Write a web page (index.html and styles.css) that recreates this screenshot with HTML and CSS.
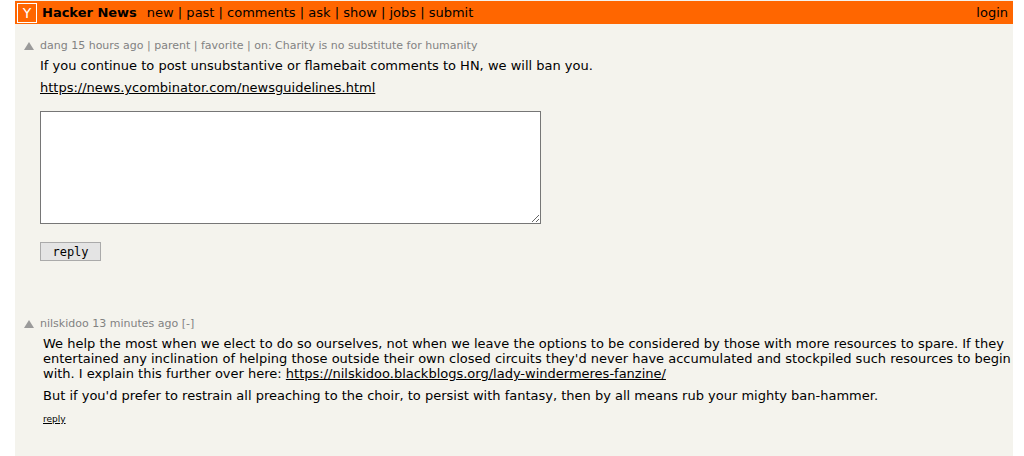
FILE: index.html
```html
<!DOCTYPE html>
<html lang="en">
<head>
  <meta charset="UTF-8">
  <title>Hacker News</title>
  <link rel="stylesheet" href="styles.css">
</head>
<body>
  <div class="page">
    <header class="topbar">
      <span class="logo">Y</span>
      <b class="brand">Hacker News</b>
      <nav class="nav">new | past | comments | ask | show | jobs | submit</nav>
      <a class="login" href="#">login</a>
    </header>
    <section class="item">
      <div class="meta"><span class="vote"></span>dang 15 hours ago | parent | favorite | on: Charity is no substitute for humanity</div>
      <div class="body">
        <p>If you continue to post unsubstantive or flamebait comments to HN, we will ban you.</p>
        <p><a href="#">https://news.ycombinator.com/newsguidelines.html</a></p>
      </div>
      <textarea class="reply-box"></textarea>
      <button class="reply-btn">reply</button>
    </section>
    <section class="item second">
      <div class="meta"><span class="vote"></span>nilskidoo 13 minutes ago [-]</div>
      <div class="body wide">
        <p>We help the most when we elect to do so ourselves, not when we leave the options to be considered by those with more resources to spare. If they entertained any inclination of helping those outside their own closed circuits they'd never have accumulated and stockpiled such resources to begin with. I explain this further over here: <a href="#">https://nilskidoo.blackblogs.org/lady-windermeres-fanzine/</a></p>
        <p>But if you'd prefer to restrain all preaching to the choir, to persist with fantasy, then by all means rub your mighty ban-hammer.</p>
      </div>
      <a class="small-reply" href="#">reply</a>
    </section>
  </div>
</body>
</html>
```
FILE: styles.css
```css
* {
  box-sizing: border-box;
}
html, body {
  margin: 0;
  height: 100%;
  overflow: hidden;
  background: #fff;
}
body {
  font-family: "DejaVu Sans", Verdana, sans-serif;
  font-size: 13px;
  color: #000;
}
a {
  color: inherit;
}
.page {
  width: 998px;
  height: 456px;
  margin-left: 15px;
  padding-top: 1px;
  background: #f4f3ed;
}
.topbar {
  display: flex;
  align-items: center;
  height: 23px;
  padding: 0 5px 0 2px;
  background: #ff6600;
  font-size: 13px;
}
.logo {
  width: 20px;
  height: 20px;
  border: 1px solid #fff;
  color: #fff;
  font-size: 14px;
  line-height: 18px;
  text-align: center;
}
.brand {
  margin-left: 5px;
}
.nav {
  margin-left: 10px;
}
.login {
  margin-left: auto;
  text-decoration: none;
}
.item {
  padding: 15px 0 0 9px;
}
.meta {
  display: flex;
  align-items: center;
  font-size: 11px;
  line-height: 14px;
  color: #828282;
}
.vote {
  width: 0;
  height: 0;
  margin-right: 6px;
  border-left: 5px solid transparent;
  border-right: 5px solid transparent;
  border-bottom: 8px solid #9a9a9a;
}
.body {
  margin: 5px 0 0 16px;
  font-size: 13px;
  line-height: 15px;
}
.body p {
  margin: 0 0 7px;
}
.reply-box {
  display: block;
  width: 501px;
  height: 113px;
  margin: 16px 0 0 16px;
  border: 1px solid #767676;
  background: #fff;
}
.reply-btn {
  display: block;
  width: 61px;
  height: 19px;
  margin: 18px 0 0 16px;
  padding: 0;
  border: 1px solid #aaa;
  background: #e4e4e4;
  font-family: "DejaVu Sans Mono", monospace;
  font-size: 12px;
  color: #000;
}
.second {
  padding-top: 56px;
  padding-left: 9px;
}
.wide {
  margin-left: 19px;
}
.small-reply {
  margin-left: 19px;
  font-size: 9px;
}
```
